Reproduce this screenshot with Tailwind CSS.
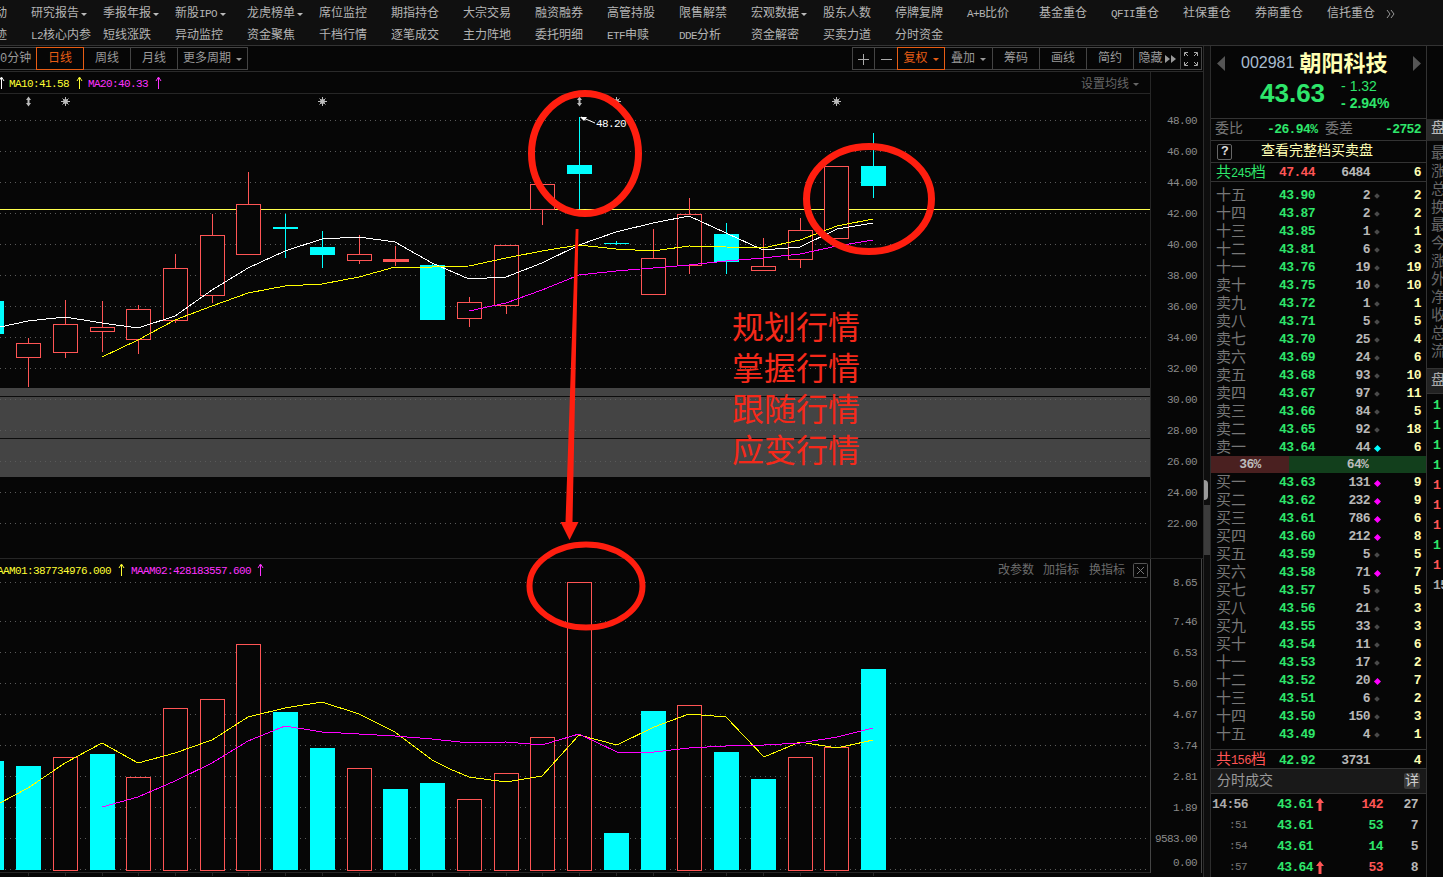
<!DOCTYPE html>
<html lang="en">
<head>
  <meta charset="UTF-8" />
  <title>朝阳科技 002981</title>
  <script src="https://cdn.jsdelivr.net/npm/@tailwindcss/browser@4"></script>
</head>
<body class="w-[1443px] h-[877px] overflow-hidden bg-[#060606] font-['Liberation_Mono','Noto_Sans_CJK_SC',monospace]">

  <!-- Top menu -->
  <nav class="h-[46px] pt-[3px] bg-[#101010] border-b border-[#333] overflow-hidden text-[12px] text-[#b4b4b4] leading-[22px]">
    <div class="grid grid-cols-[repeat(21,72px)] -ml-[41px] w-[1600px]">
      <span>主力异动</span>
      <span class="flex items-center gap-[2px]">研究报告<i class="w-0 h-0 border-x-[3px] border-x-transparent border-t-[3px] border-t-[#bbb]"></i></span>
      <span class="flex items-center gap-[2px]">季报年报<i class="w-0 h-0 border-x-[3px] border-x-transparent border-t-[3px] border-t-[#bbb]"></i></span>
      <span class="flex items-center gap-[3px]"><span>新股<span class="text-[11px] tracking-[-0.6px]">IPO</span></span><i class="w-0 h-0 border-x-[3px] border-x-transparent border-t-[3px] border-t-[#bbb]"></i></span>
      <span class="flex items-center gap-[2px]">龙虎榜单<i class="w-0 h-0 border-x-[3px] border-x-transparent border-t-[3px] border-t-[#bbb]"></i></span>
      <span>席位监控</span>
      <span>期指持仓</span>
      <span>大宗交易</span>
      <span>融资融券</span>
      <span>高管持股</span>
      <span>限售解禁</span>
      <span class="flex items-center gap-[2px]">宏观数据<i class="w-0 h-0 border-x-[3px] border-x-transparent border-t-[3px] border-t-[#bbb]"></i></span>
      <span>股东人数</span>
      <span>停牌复牌</span>
      <span><span class="text-[11px] tracking-[-0.6px]">A+B</span>比价</span>
      <span>基金重仓</span>
      <span><span class="text-[11px] tracking-[-0.6px]">QFII</span>重仓</span>
      <span>社保重仓</span>
      <span>券商重仓</span>
      <span class="flex items-center">信托重仓
        <svg class="w-[9px] h-[8px] ml-[11px]" viewBox="0 0 9 8" fill="none" stroke="#999"><path d="M1 0l3 4-3 4M5 0l3 4-3 4"/></svg>
      </span>
      <span></span>

      <span>主力足迹</span>
      <span><span class="text-[11px] tracking-[-0.6px]">L2</span>核心内参</span>
      <span>短线涨跌</span>
      <span>异动监控</span>
      <span>资金聚焦</span>
      <span>千档行情</span>
      <span>逐笔成交</span>
      <span>主力阵地</span>
      <span>委托明细</span>
      <span><span class="text-[11px] tracking-[-0.6px]">ETF</span>申赎</span>
      <span><span class="text-[11px] tracking-[-0.6px]">DDE</span>分析</span>
      <span>资金解密</span>
      <span>买卖力道</span>
      <span>分时资金</span>
    </div>
  </nav>

  <div class="flex h-[831px]">
    <!-- Chart column -->
    <div class="w-[1203px] shrink-0 overflow-hidden">
      <!-- Period and tool buttons -->
      <div class="h-[26px] pt-px border-b border-[#2a2a2a] flex justify-between text-[12px] text-[#999]">
        <div class="flex h-[23px] -ml-[12px] border border-[#444] border-l-0 [&>span]:pt-px">
          <span class="w-[48px] flex items-center justify-center">60分钟</span>
          <span class="w-[48px] flex items-center justify-center border border-[#e85d14] text-[#e85d14] -my-px">日线</span>
          <span class="w-[47px] flex items-center justify-center border-r border-[#444]">周线</span>
          <span class="w-[47px] flex items-center justify-center border-r border-[#444]">月线</span>
          <span class="w-[69px] flex items-center justify-center gap-[5px]">更多周期<i class="w-0 h-0 border-x-[3px] border-x-transparent border-t-[3px] border-t-[#999]"></i></span>
        </div>
        <div class="flex h-[23px] mr-px border border-[#444] [&>span]:pt-px">
          <span class="w-[22px] flex items-center justify-center border-r border-[#444]">
            <svg class="w-[11px] h-[11px]" viewBox="0 0 11 11" stroke="#aaa"><path d="M0 5.5h11M5.5 0v11"/></svg>
          </span>
          <span class="w-[22px] flex items-center justify-center">
            <svg class="w-[11px] h-[11px]" viewBox="0 0 11 11" stroke="#aaa"><path d="M0 5.5h11"/></svg>
          </span>
          <span class="w-[48px] flex items-center justify-center gap-[5px] border border-[#e85d14] text-[#e85d14] -my-px">复权<i class="w-0 h-0 border-x-[3px] border-x-transparent border-t-[3px] border-t-[#e85d14]"></i></span>
          <span class="w-[48px] flex items-center justify-center gap-[5px] border-r border-[#444]">叠加<i class="w-0 h-0 border-x-[3px] border-x-transparent border-t-[3px] border-t-[#999]"></i></span>
          <span class="w-[47px] flex items-center justify-center border-r border-[#444]">筹码</span>
          <span class="w-[47px] flex items-center justify-center border-r border-[#444]">画线</span>
          <span class="w-[47px] flex items-center justify-center border-r border-[#444]">简约</span>
          <span class="w-[47px] flex items-center justify-center gap-[2px] border-r border-[#444]">隐藏
            <svg class="w-[11px] h-[8px]" viewBox="0 0 11 8" fill="#999"><path d="M0 0l5 4-5 4zM6 0l5 4-5 4z"/></svg>
          </span>
          <span class="w-[20px] flex items-center justify-center">
            <svg class="w-[14px] h-[14px]" viewBox="0 0 14 14" fill="none" stroke="#aaa"><path d="M.5 4V.5H4M10 .5h3.5V4M13.5 10v3.5H10M4 13.5H.5V10M1 1l3 3M13 1l-3 3M13 13l-3-3M1 13l3-3"/></svg>
          </span>
        </div>
      </div>

      <!-- Candles, volume and hand drawn marks. Coordinates are page pixels -->
      <svg class="block w-[1203px] h-[805px]" viewBox="0 72 1203 805" font-size="11" letter-spacing="-0.6">
        <!-- frame -->
        <g stroke="#262626" shape-rendering="crispEdges">
          <path d="M0 93.5H1150M1150.5 72V873M0 558.5H1203M0 872.5H1150"/>
          <path stroke="#444" d="M1150.5 559V873M1201.5 559V873"/>
          <path d="M28.5 872v4M65.5 872v4M102.5 872v4M138.5 872v4M175.5 872v4M212.5 872v4M248.5 872v4M285.5 872v4M322.5 872v4M359.5 872v4M395.5 872v4M432.5 872v4M469.5 872v4M506.5 872v4M542.5 872v4M579.5 872v4M616.5 872v4M653.5 872v4M689.5 872v4M726.5 872v4M763.5 872v4M800.5 872v4M836.5 872v4M873.5 872v4"/>
        </g>
        <rect x="0" y="388" width="1150" height="89" fill="#444" shape-rendering="crispEdges"/>
        <path d="M0 396.5H1150M0 438.5H1150" stroke="#0c0c0c" shape-rendering="crispEdges"/>
        <!-- dotted grid -->
        <path stroke="#5a5a5a" stroke-dasharray="1 4" shape-rendering="crispEdges" d="M0 120.5H1150M0 151.5H1150M0 182.5H1150M0 213.5H1150M0 244.5H1150M0 275.5H1150M0 306.5H1150M0 337.5H1150M0 368.5H1150M0 399.5H1150M0 430.5H1150M0 461.5H1150M0 492.5H1150M0 523.5H1150M0 582.5H1150M0 621.5H1150M0 652.5H1150M0 683.5H1150M0 714.5H1150M0 745.5H1150M0 776.5H1150M0 807.5H1150M0 838.5H1150M0 869.5H1150"/>
        <path d="M0 209.5H1150" stroke="#ffff4d" shape-rendering="crispEdges"/>

        <!-- legends -->
        <text x="9" y="87" fill="#ffff33">MA10:41.58</text>
        <text x="88" y="87" fill="#ff33ff">MA20:40.33</text>
        <path d="M1.5 89V78M-1 81l2.5-4 2.5 4" stroke="#fff" fill="none"/>
        <path d="M79.5 89V78M77 81l2.5-4 2.5 4" stroke="#ffff33" fill="none"/>
        <path d="M158.5 89V78M156 81l2.5-4 2.5 4" stroke="#ff33ff" fill="none"/>
        <text x="1081" y="88" font-size="12" letter-spacing="0" fill="#666">设置均线</text>
        <path d="M1133 83h6l-3 3z" fill="#666"/>
        <text x="-9" y="574" fill="#ffff33">MAAM01:387734976.000</text>
        <text x="131" y="574" fill="#ff33ff">MAAM02:428183557.600</text>
        <path d="M121.5 576V565M119 568l2.5-4 2.5 4" stroke="#ffff33" fill="none"/>
        <path d="M260.5 576V565M258 568l2.5-4 2.5 4" stroke="#ff33ff" fill="none"/>
        <g font-size="12" letter-spacing="0" fill="#6c6c6c">
          <text x="998" y="574">改参数</text>
          <text x="1043" y="574">加指标</text>
          <text x="1089" y="574">换指标</text>
        </g>
        <rect x="1133.5" y="563.5" width="14" height="14" rx="1" fill="none" stroke="#555"/>
        <path d="M1137 567l7 7M1144 567l-7 7" stroke="#777"/>

        <!-- axis labels -->
        <g fill="#8a8a8a" text-anchor="end">
          <text x="1197" y="124">48.00</text><text x="1197" y="155">46.00</text><text x="1197" y="186">44.00</text>
          <text x="1197" y="217">42.00</text><text x="1197" y="248">40.00</text><text x="1197" y="279">38.00</text>
          <text x="1197" y="310">36.00</text><text x="1197" y="341">34.00</text><text x="1197" y="372">32.00</text>
          <text x="1197" y="403">30.00</text><text x="1197" y="434">28.00</text><text x="1197" y="465">26.00</text>
          <text x="1197" y="496">24.00</text><text x="1197" y="527">22.00</text>
          <text x="1197" y="586">8.65</text><text x="1197" y="625">7.46</text><text x="1197" y="656">6.53</text>
          <text x="1197" y="687">5.60</text><text x="1197" y="718">4.67</text><text x="1197" y="749">3.74</text>
          <text x="1197" y="780">2.81</text><text x="1197" y="811">1.89</text>
          <text x="1197" y="842">9583.00</text><text x="1197" y="866">0.00</text>
        </g>

        <!-- signal marks -->
        <g fill="#bbb" stroke="#bbb">
          <path d="M28.5 99v5" stroke-width="2"/><path d="M26 100l2.5-3.5 2.5 3.5zM26 103l2.5 3.5 2.5-3.5z" stroke="none"/>
          <path d="M579.5 99v5" stroke-width="2"/><path d="M577 100l2.5-3.5 2.5 3.5zM577 103l2.5 3.5 2.5-3.5z" stroke="none"/>
          <circle cx="65.5" cy="101.5" r="2"/><path d="M61 101.5h9M65.5 97v9M62.5 98.5l6 6M68.5 98.5l-6 6"/>
          <circle cx="322.5" cy="101.5" r="2"/><path d="M318 101.5h9M322.5 97v9M319.5 98.5l6 6M325.5 98.5l-6 6"/>
          <circle cx="616.5" cy="101.5" r="2"/><path d="M612 101.5h9M616.5 97v9M613.5 98.5l6 6M619.5 98.5l-6 6"/>
          <circle cx="836.5" cy="101.5" r="2"/><path d="M832 101.5h9M836.5 97v9M833.5 98.5l6 6M839.5 98.5l-6 6"/>
        </g>

        <!-- candle wicks -->
        <path fill="none" stroke="#ff5555" shape-rendering="crispEdges" d="M28.5 338V387M65.5 300V358M102.5 301V352M138.5 305V354M175.5 254V323M212.5 214V303M248.5 172V254M359.5 235V264M395.5 246V266M469.5 297V327M506.5 245V314M542.5 184V225M653.5 229V295M689.5 198V274M763.5 238V271M800.5 218V268"/>
        <path fill="none" stroke="#00ffff" shape-rendering="crispEdges" d="M285.5 214V258M322.5 231V268M432.5 263V320M579.5 117V209M616.5 241V245M726.5 223V274M873.5 133V198"/>
        <!-- red candles -->
        <g fill="#060606" stroke="#ff5555" shape-rendering="crispEdges">
          <rect x="16.5" y="343.5" width="24" height="14"/>
          <rect x="53.5" y="324.5" width="24" height="28"/>
          <rect x="90.5" y="327.5" width="24" height="4"/>
          <rect x="126.5" y="309.5" width="24" height="30"/>
          <rect x="163.5" y="268.5" width="24" height="52"/>
          <rect x="200.5" y="235.5" width="24" height="60"/>
          <rect x="236.5" y="204.5" width="24" height="50"/>
          <rect x="347.5" y="254.5" width="24" height="6"/>
          <rect x="383" y="259.5" width="25" height="1.5" fill="#ff5555"/>
          <rect x="457.5" y="302.5" width="24" height="16"/>
          <rect x="494.5" y="245.5" width="24" height="60"/>
          <rect x="530.5" y="184.5" width="24" height="25"/>
          <rect x="641.5" y="258.5" width="24" height="36"/>
          <rect x="677.5" y="214.5" width="24" height="51"/>
          <rect x="751.5" y="266.5" width="24" height="4"/>
          <rect x="788.5" y="230.5" width="24" height="29"/>
          <rect x="824.5" y="166.5" width="24" height="72"/>
        </g>
        <!-- cyan candles -->
        <g fill="#00ffff" shape-rendering="crispEdges">
          <rect x="-4" y="301" width="8" height="33"/>
          <rect x="273" y="227" width="25" height="2"/>
          <rect x="310" y="247" width="25" height="8"/>
          <rect x="420" y="265" width="25" height="55"/>
          <rect x="567" y="165" width="25" height="9"/>
          <rect x="604" y="243" width="25" height="1"/>
          <rect x="714" y="234" width="25" height="28"/>
          <rect x="861" y="166" width="25" height="20"/>
        </g>
        <!-- moving averages -->
        <g fill="none" shape-rendering="crispEdges">
          <polyline stroke="#ffffff" points="0,327 28,321 65,317 102,323 138,328 175,316 212,290 248,268 285,251 322,239 359,237 395,242 432,263 469,279 506,277 542,263 579,245 616,232 653,223 689,216 726,233 763,250 800,247 837,229 873,223"/>
          <polyline stroke="#ffff00" points="102,357 138,340 175,320 212,306 248,293 285,286 322,284 359,277 395,267 432,267 469,266 506,258 542,251 579,245 616,249 653,251 689,246 726,247 763,248 800,240 837,226 873,219"/>
          <polyline stroke="#ff00ff" points="469,311 506,303 542,290 579,275 616,271 653,268 689,265 726,261 763,258 800,254 837,246 873,240"/>
        </g>
        <!-- high price tag -->
        <path d="M581 117l14 6" stroke="#fff"/>
        <path d="M580 117l7 0-3 4z" fill="#fff"/>
        <text x="596" y="127" fill="#fff">48.20</text>

        <!-- volume bars -->
        <g fill="#060606" stroke="#ff5555" shape-rendering="crispEdges">
          <rect x="53.5" y="757" width="24" height="113"/>
          <rect x="126.5" y="777.5" width="24" height="92.5"/>
          <rect x="163.5" y="708.5" width="24" height="161.5"/>
          <rect x="200.5" y="699.5" width="24" height="170.5"/>
          <rect x="236.5" y="644.5" width="24" height="225.5"/>
          <rect x="347.5" y="768.5" width="24" height="101.5"/>
          <rect x="457.5" y="799.5" width="24" height="70.5"/>
          <rect x="494.5" y="773.5" width="24" height="96.5"/>
          <rect x="530.5" y="737.5" width="24" height="132.5"/>
          <rect x="567.5" y="582.5" width="24" height="287.5"/>
          <rect x="677.5" y="705.5" width="24" height="164.5"/>
          <rect x="788.5" y="757.5" width="24" height="112.5"/>
          <rect x="824.5" y="747.5" width="24" height="122.5"/>
        </g>
        <g fill="#00ffff" shape-rendering="crispEdges">
          <rect x="-4" y="761" width="8" height="109"/>
          <rect x="16" y="766" width="25" height="104"/>
          <rect x="90" y="754" width="25" height="116"/>
          <rect x="273" y="712" width="25" height="158"/>
          <rect x="310" y="748" width="25" height="122"/>
          <rect x="383" y="789" width="25" height="81"/>
          <rect x="420" y="783" width="25" height="87"/>
          <rect x="604" y="833" width="25" height="37"/>
          <rect x="641" y="711" width="25" height="159"/>
          <rect x="714" y="752" width="25" height="118"/>
          <rect x="751" y="779" width="25" height="91"/>
          <rect x="861" y="669" width="25" height="201"/>
        </g>
        <g fill="none" shape-rendering="crispEdges">
          <polyline stroke="#ffff00" points="0,803 28,788 65,763 102,743 138,763 175,753 212,740 248,717 285,708 322,702 359,714 395,732 432,760 450,769 469,777 506,782 542,776 579,735 617,745 654,727 689,714 726,717 764,757 800,742 837,748 873,740"/>
          <polyline stroke="#ff00ff" points="102,807 138,797 175,781 212,763 248,741 285,726 322,732 359,734 395,736 432,739 469,743 506,742 542,745 579,734 617,752 654,752 689,748 726,746 764,745 800,743 837,737 873,728"/>
        </g>

        <!-- red annotations -->
        <g fill="none" stroke="#ff1e0f">
          <ellipse cx="585" cy="153.5" rx="53.5" ry="60" stroke-width="7"/>
          <ellipse cx="869" cy="199" rx="62.5" ry="52.5" stroke-width="7"/>
          <ellipse cx="586" cy="586" rx="56.5" ry="41.5" stroke-width="6"/>
        </g>
        <polygon fill="#ff1e0f" points="575.7,229 578.5,229 572.5,522 578.5,522 569.5,540 560.5,522 565.5,522"/>
        <g font-size="32" letter-spacing="0" fill="#f5291a">
          <text x="732" y="339">规划行情</text>
          <text x="732" y="380">掌握行情</text>
          <text x="732" y="421">跟随行情</text>
          <text x="732" y="462">应变行情</text>
        </g>
      </svg>
    </div>

    <!-- Splitter between chart and quote panel -->
    <div class="w-[8px] shrink-0 bg-[#0e0e0e] border-x border-[#2c2c2c] flex flex-col">
      <div class="h-[434px]"></div>
      <div class="h-[20px] w-[4px] bg-[#999] rounded-r-full"></div>
      <div class="h-[5px]"></div>
      <div class="h-[50px] bg-[#3c3c3c]"></div>
    </div>

    <!-- Quote panel -->
    <aside class="w-[216px] shrink-0 border-r border-[#333] text-[13px] tracking-[-0.6px] font-bold text-[#b8b8b8]">
      <header class="h-[73px] border-b border-[#333] tracking-normal font-['Liberation_Sans','Noto_Sans_CJK_SC',sans-serif]">
        <div class="h-[32px] flex items-center pt-[2px] relative">
          <svg class="absolute left-[6px] top-[10px] w-[8px] h-[15px]" viewBox="0 0 8 15" fill="#555"><path d="M8 0v15L0 7.5z"/></svg>
          <span class="ml-[30px] text-[16px] font-normal text-[#a8bcd0]">002981</span>
          <span class="ml-[5px] text-[22px] text-[#ffffb3]">朝阳科技</span>
          <svg class="absolute left-[202px] top-[10px] w-[8px] h-[15px]" viewBox="0 0 8 15" fill="#555"><path d="M0 0v15l8-7.5z"/></svg>
        </div>
        <div class="flex items-center text-[#2ee66b]">
          <span class="ml-[49px] pb-[4px] text-[26px] leading-[30px]">43.63</span>
          <div class="ml-[16px] flex flex-col leading-[17px] font-normal text-[14px]">
            <span>- 1.32</span>
            <span class="font-bold">- 2.94%</span>
          </div>
        </div>
      </header>

      <div class="h-[22px] border-b border-[#333] flex items-center text-[#2ee66b]">
        <span class="ml-[4px] w-[52px] text-[14px] tracking-normal font-normal text-[#777]">委比</span>
        <span class="w-[58px]">-26.94%</span>
        <span class="text-[14px] tracking-normal font-normal text-[#777]">委差</span>
        <span class="ml-auto mr-[5px]">-2752</span>
      </div>
      <div class="h-[22px] border-b border-[#333] flex items-center text-[#ffffb3]">
        <span class="ml-[6px] w-[15px] h-[16px] border border-[#666] rounded-[2px] text-[#ddd] flex items-center justify-center">?</span>
        <span class="ml-[29px] text-[14px] tracking-normal font-normal">查看完整档买卖盘</span>
      </div>
      <div class="h-[19px] border-b border-[#333] grid grid-cols-[68px_40px_51px_14px_1fr] items-center [&>span:not(:first-child)]:-translate-y-[2px]">
        <span class="pl-[5px] text-[15px] tracking-normal font-normal text-[#2ee66b] whitespace-nowrap">共<span class="text-[12px] tracking-[-0.6px]">245</span>档</span>
        <span class="text-[#ff5555]">47.44</span>
        <span class="text-right">6484</span><span></span>
        <span class="text-right pr-[5px] text-[#ffffb3]">6</span>
      </div>

      <!-- Sell side -->
      <div class="pt-[4px] h-[274px] [&>div>span:not(:first-child)]:-translate-y-[2px] [&>div>i]:-translate-y-px">
        <div class="h-[18px] grid grid-cols-[68px_40px_51px_14px_1fr] items-center"><span class="pl-[5px] text-[15px] tracking-normal font-normal text-[#777]">十五</span><span class="text-[#2ee66b]">43.90</span><span class="text-right">2</span><i class="justify-self-center w-[4px] h-[4px] rotate-45 bg-[#4a4a4a]"></i><span class="text-right pr-[5px] text-[#ffffb3]">2</span></div>
        <div class="h-[18px] grid grid-cols-[68px_40px_51px_14px_1fr] items-center"><span class="pl-[5px] text-[15px] tracking-normal font-normal text-[#777]">十四</span><span class="text-[#2ee66b]">43.87</span><span class="text-right">2</span><i class="justify-self-center w-[4px] h-[4px] rotate-45 bg-[#4a4a4a]"></i><span class="text-right pr-[5px] text-[#ffffb3]">2</span></div>
        <div class="h-[18px] grid grid-cols-[68px_40px_51px_14px_1fr] items-center"><span class="pl-[5px] text-[15px] tracking-normal font-normal text-[#777]">十三</span><span class="text-[#2ee66b]">43.85</span><span class="text-right">1</span><i class="justify-self-center w-[4px] h-[4px] rotate-45 bg-[#4a4a4a]"></i><span class="text-right pr-[5px] text-[#ffffb3]">1</span></div>
        <div class="h-[18px] grid grid-cols-[68px_40px_51px_14px_1fr] items-center"><span class="pl-[5px] text-[15px] tracking-normal font-normal text-[#777]">十二</span><span class="text-[#2ee66b]">43.81</span><span class="text-right">6</span><i class="justify-self-center w-[4px] h-[4px] rotate-45 bg-[#4a4a4a]"></i><span class="text-right pr-[5px] text-[#ffffb3]">3</span></div>
        <div class="h-[18px] grid grid-cols-[68px_40px_51px_14px_1fr] items-center"><span class="pl-[5px] text-[15px] tracking-normal font-normal text-[#777]">十一</span><span class="text-[#2ee66b]">43.76</span><span class="text-right">19</span><i class="justify-self-center w-[4px] h-[4px] rotate-45 bg-[#4a4a4a]"></i><span class="text-right pr-[5px] text-[#ffffb3]">19</span></div>
        <div class="h-[18px] grid grid-cols-[68px_40px_51px_14px_1fr] items-center"><span class="pl-[5px] text-[15px] tracking-normal font-normal text-[#777]">卖十</span><span class="text-[#2ee66b]">43.75</span><span class="text-right">10</span><i class="justify-self-center w-[4px] h-[4px] rotate-45 bg-[#4a4a4a]"></i><span class="text-right pr-[5px] text-[#ffffb3]">10</span></div>
        <div class="h-[18px] grid grid-cols-[68px_40px_51px_14px_1fr] items-center"><span class="pl-[5px] text-[15px] tracking-normal font-normal text-[#777]">卖九</span><span class="text-[#2ee66b]">43.72</span><span class="text-right">1</span><i class="justify-self-center w-[4px] h-[4px] rotate-45 bg-[#4a4a4a]"></i><span class="text-right pr-[5px] text-[#ffffb3]">1</span></div>
        <div class="h-[18px] grid grid-cols-[68px_40px_51px_14px_1fr] items-center"><span class="pl-[5px] text-[15px] tracking-normal font-normal text-[#777]">卖八</span><span class="text-[#2ee66b]">43.71</span><span class="text-right">5</span><i class="justify-self-center w-[4px] h-[4px] rotate-45 bg-[#4a4a4a]"></i><span class="text-right pr-[5px] text-[#ffffb3]">5</span></div>
        <div class="h-[18px] grid grid-cols-[68px_40px_51px_14px_1fr] items-center"><span class="pl-[5px] text-[15px] tracking-normal font-normal text-[#777]">卖七</span><span class="text-[#2ee66b]">43.70</span><span class="text-right">25</span><i class="justify-self-center w-[4px] h-[4px] rotate-45 bg-[#4a4a4a]"></i><span class="text-right pr-[5px] text-[#ffffb3]">4</span></div>
        <div class="h-[18px] grid grid-cols-[68px_40px_51px_14px_1fr] items-center"><span class="pl-[5px] text-[15px] tracking-normal font-normal text-[#777]">卖六</span><span class="text-[#2ee66b]">43.69</span><span class="text-right">24</span><i class="justify-self-center w-[4px] h-[4px] rotate-45 bg-[#4a4a4a]"></i><span class="text-right pr-[5px] text-[#ffffb3]">6</span></div>
        <div class="h-[18px] grid grid-cols-[68px_40px_51px_14px_1fr] items-center"><span class="pl-[5px] text-[15px] tracking-normal font-normal text-[#777]">卖五</span><span class="text-[#2ee66b]">43.68</span><span class="text-right">93</span><i class="justify-self-center w-[4px] h-[4px] rotate-45 bg-[#4a4a4a]"></i><span class="text-right pr-[5px] text-[#ffffb3]">10</span></div>
        <div class="h-[18px] grid grid-cols-[68px_40px_51px_14px_1fr] items-center"><span class="pl-[5px] text-[15px] tracking-normal font-normal text-[#777]">卖四</span><span class="text-[#2ee66b]">43.67</span><span class="text-right">97</span><i class="justify-self-center w-[4px] h-[4px] rotate-45 bg-[#4a4a4a]"></i><span class="text-right pr-[5px] text-[#ffffb3]">11</span></div>
        <div class="h-[18px] grid grid-cols-[68px_40px_51px_14px_1fr] items-center"><span class="pl-[5px] text-[15px] tracking-normal font-normal text-[#777]">卖三</span><span class="text-[#2ee66b]">43.66</span><span class="text-right">84</span><i class="justify-self-center w-[4px] h-[4px] rotate-45 bg-[#4a4a4a]"></i><span class="text-right pr-[5px] text-[#ffffb3]">5</span></div>
        <div class="h-[18px] grid grid-cols-[68px_40px_51px_14px_1fr] items-center"><span class="pl-[5px] text-[15px] tracking-normal font-normal text-[#777]">卖二</span><span class="text-[#2ee66b]">43.65</span><span class="text-right">92</span><i class="justify-self-center w-[4px] h-[4px] rotate-45 bg-[#4a4a4a]"></i><span class="text-right pr-[5px] text-[#ffffb3]">18</span></div>
        <div class="h-[18px] grid grid-cols-[68px_40px_51px_14px_1fr] items-center"><span class="pl-[5px] text-[15px] tracking-normal font-normal text-[#777]">卖一</span><span class="text-[#2ee66b]">43.64</span><span class="text-right">44</span><i class="justify-self-center w-[5px] h-[5px] rotate-45 bg-[#00ffff]"></i><span class="text-right pr-[5px] text-[#ffffb3]">6</span></div>
      </div>

      <!-- Sell / buy ratio -->
      <div class="h-[17px] flex text-[#bbb]">
        <span class="w-[78px] bg-[#4a2020] flex items-center justify-center">36%</span>
        <span class="flex-1 bg-[#123f1c] flex items-center justify-center">64%</span>
      </div>

      <!-- Buy side -->
      <div class="h-[277px] border-b border-[#333] [&>div>span:not(:first-child)]:-translate-y-[2px] [&>div>i]:-translate-y-px">
        <div class="h-[18px] grid grid-cols-[68px_40px_51px_14px_1fr] items-center"><span class="pl-[5px] text-[15px] tracking-normal font-normal text-[#777]">买一</span><span class="text-[#2ee66b]">43.63</span><span class="text-right">131</span><i class="justify-self-center w-[5px] h-[5px] rotate-45 bg-[#ff00ff]"></i><span class="text-right pr-[5px] text-[#ffffb3]">9</span></div>
        <div class="h-[18px] grid grid-cols-[68px_40px_51px_14px_1fr] items-center"><span class="pl-[5px] text-[15px] tracking-normal font-normal text-[#777]">买二</span><span class="text-[#2ee66b]">43.62</span><span class="text-right">232</span><i class="justify-self-center w-[5px] h-[5px] rotate-45 bg-[#ff00ff]"></i><span class="text-right pr-[5px] text-[#ffffb3]">9</span></div>
        <div class="h-[18px] grid grid-cols-[68px_40px_51px_14px_1fr] items-center"><span class="pl-[5px] text-[15px] tracking-normal font-normal text-[#777]">买三</span><span class="text-[#2ee66b]">43.61</span><span class="text-right">786</span><i class="justify-self-center w-[5px] h-[5px] rotate-45 bg-[#ff00ff]"></i><span class="text-right pr-[5px] text-[#ffffb3]">6</span></div>
        <div class="h-[18px] grid grid-cols-[68px_40px_51px_14px_1fr] items-center"><span class="pl-[5px] text-[15px] tracking-normal font-normal text-[#777]">买四</span><span class="text-[#2ee66b]">43.60</span><span class="text-right">212</span><i class="justify-self-center w-[5px] h-[5px] rotate-45 bg-[#ff00ff]"></i><span class="text-right pr-[5px] text-[#ffffb3]">8</span></div>
        <div class="h-[18px] grid grid-cols-[68px_40px_51px_14px_1fr] items-center"><span class="pl-[5px] text-[15px] tracking-normal font-normal text-[#777]">买五</span><span class="text-[#2ee66b]">43.59</span><span class="text-right">5</span><i class="justify-self-center w-[4px] h-[4px] rotate-45 bg-[#4a4a4a]"></i><span class="text-right pr-[5px] text-[#ffffb3]">5</span></div>
        <div class="h-[18px] grid grid-cols-[68px_40px_51px_14px_1fr] items-center"><span class="pl-[5px] text-[15px] tracking-normal font-normal text-[#777]">买六</span><span class="text-[#2ee66b]">43.58</span><span class="text-right">71</span><i class="justify-self-center w-[5px] h-[5px] rotate-45 bg-[#ff00ff]"></i><span class="text-right pr-[5px] text-[#ffffb3]">7</span></div>
        <div class="h-[18px] grid grid-cols-[68px_40px_51px_14px_1fr] items-center"><span class="pl-[5px] text-[15px] tracking-normal font-normal text-[#777]">买七</span><span class="text-[#2ee66b]">43.57</span><span class="text-right">5</span><i class="justify-self-center w-[4px] h-[4px] rotate-45 bg-[#4a4a4a]"></i><span class="text-right pr-[5px] text-[#ffffb3]">5</span></div>
        <div class="h-[18px] grid grid-cols-[68px_40px_51px_14px_1fr] items-center"><span class="pl-[5px] text-[15px] tracking-normal font-normal text-[#777]">买八</span><span class="text-[#2ee66b]">43.56</span><span class="text-right">21</span><i class="justify-self-center w-[4px] h-[4px] rotate-45 bg-[#4a4a4a]"></i><span class="text-right pr-[5px] text-[#ffffb3]">3</span></div>
        <div class="h-[18px] grid grid-cols-[68px_40px_51px_14px_1fr] items-center"><span class="pl-[5px] text-[15px] tracking-normal font-normal text-[#777]">买九</span><span class="text-[#2ee66b]">43.55</span><span class="text-right">33</span><i class="justify-self-center w-[4px] h-[4px] rotate-45 bg-[#4a4a4a]"></i><span class="text-right pr-[5px] text-[#ffffb3]">3</span></div>
        <div class="h-[18px] grid grid-cols-[68px_40px_51px_14px_1fr] items-center"><span class="pl-[5px] text-[15px] tracking-normal font-normal text-[#777]">买十</span><span class="text-[#2ee66b]">43.54</span><span class="text-right">11</span><i class="justify-self-center w-[4px] h-[4px] rotate-45 bg-[#4a4a4a]"></i><span class="text-right pr-[5px] text-[#ffffb3]">6</span></div>
        <div class="h-[18px] grid grid-cols-[68px_40px_51px_14px_1fr] items-center"><span class="pl-[5px] text-[15px] tracking-normal font-normal text-[#777]">十一</span><span class="text-[#2ee66b]">43.53</span><span class="text-right">17</span><i class="justify-self-center w-[4px] h-[4px] rotate-45 bg-[#4a4a4a]"></i><span class="text-right pr-[5px] text-[#ffffb3]">2</span></div>
        <div class="h-[18px] grid grid-cols-[68px_40px_51px_14px_1fr] items-center"><span class="pl-[5px] text-[15px] tracking-normal font-normal text-[#777]">十二</span><span class="text-[#2ee66b]">43.52</span><span class="text-right">20</span><i class="justify-self-center w-[5px] h-[5px] rotate-45 bg-[#ff00ff]"></i><span class="text-right pr-[5px] text-[#ffffb3]">7</span></div>
        <div class="h-[18px] grid grid-cols-[68px_40px_51px_14px_1fr] items-center"><span class="pl-[5px] text-[15px] tracking-normal font-normal text-[#777]">十三</span><span class="text-[#2ee66b]">43.51</span><span class="text-right">6</span><i class="justify-self-center w-[4px] h-[4px] rotate-45 bg-[#4a4a4a]"></i><span class="text-right pr-[5px] text-[#ffffb3]">2</span></div>
        <div class="h-[18px] grid grid-cols-[68px_40px_51px_14px_1fr] items-center"><span class="pl-[5px] text-[15px] tracking-normal font-normal text-[#777]">十四</span><span class="text-[#2ee66b]">43.50</span><span class="text-right">150</span><i class="justify-self-center w-[4px] h-[4px] rotate-45 bg-[#4a4a4a]"></i><span class="text-right pr-[5px] text-[#ffffb3]">3</span></div>
        <div class="h-[18px] grid grid-cols-[68px_40px_51px_14px_1fr] items-center"><span class="pl-[5px] text-[15px] tracking-normal font-normal text-[#777]">十五</span><span class="text-[#2ee66b]">43.49</span><span class="text-right">4</span><i class="justify-self-center w-[4px] h-[4px] rotate-45 bg-[#4a4a4a]"></i><span class="text-right pr-[5px] text-[#ffffb3]">1</span></div>
      </div>

      <div class="h-[19px] border-b border-[#333] grid grid-cols-[68px_40px_51px_14px_1fr] items-center [&>span:not(:first-child)]:-translate-y-px">
        <span class="pl-[5px] text-[15px] tracking-normal font-normal text-[#ff5555] whitespace-nowrap">共<span class="text-[12px] tracking-[-0.6px]">156</span>档</span>
        <span class="text-[#2ee66b]">42.92</span>
        <span class="text-right">3731</span><span></span>
        <span class="text-right pr-[5px] text-[#ffffb3]">4</span>
      </div>

      <div class="h-[25px] bg-[#191919] border-b border-[#333] flex items-center justify-between pl-[6px] pr-[6px] text-[14px] tracking-normal font-normal text-[#999]">
        <span>分时成交</span>
        <span class="w-[16px] h-[16px] bg-[#3a3a3a] rounded-[2px] flex items-center justify-center text-[#ccc]">详</span>
      </div>

      <!-- Trades -->
      <div class="h-[21px] grid grid-cols-[66px_50px_56px_35px] items-center">
        <span class="pl-px text-[#aaa]">14:56</span>
        <span class="flex items-center text-[#2ee66b]">43.61<svg class="w-[8px] h-[13px] ml-[3px]" viewBox="0 0 8 13" fill="#ff5555"><path d="M4 0l4 5H5.5v8h-3V5H0z"/></svg></span>
        <span class="text-right text-[#ff5555]">142</span>
        <span class="text-right">27</span>
      </div>
      <div class="h-[21px] grid grid-cols-[66px_50px_56px_35px] items-center">
        <span class="w-[36px] text-right text-[11px] font-normal text-[#777]">:51</span>
        <span class="text-[#2ee66b]">43.61</span>
        <span class="text-right text-[#2ee66b]">53</span>
        <span class="text-right">7</span>
      </div>
      <div class="h-[21px] grid grid-cols-[66px_50px_56px_35px] items-center">
        <span class="w-[36px] text-right text-[11px] font-normal text-[#777]">:54</span>
        <span class="text-[#2ee66b]">43.61</span>
        <span class="text-right text-[#2ee66b]">14</span>
        <span class="text-right">5</span>
      </div>
      <div class="h-[21px] grid grid-cols-[66px_50px_56px_35px] items-center">
        <span class="w-[36px] text-right text-[11px] font-normal text-[#777]">:57</span>
        <span class="flex items-center text-[#2ee66b]">43.64<svg class="w-[8px] h-[13px] ml-[3px]" viewBox="0 0 8 13" fill="#ff5555"><path d="M4 0l4 5H5.5v8h-3V5H0z"/></svg></span>
        <span class="text-right text-[#ff5555]">53</span>
        <span class="text-right">8</span>
      </div>
    </aside>

    <!-- Clipped side panel -->
    <aside class="flex-1 overflow-hidden whitespace-nowrap text-[15px] text-[#666]">
      <div class="h-[73px]"></div>
      <div class="h-[22px] bg-[#2a2a2a] text-[#bbb] pl-[4px] leading-[22px]">盘</div>
      <div class="pl-[4px] pt-[5px] leading-[18px] h-[228px] border-b border-[#333]">
        <div>最</div><div>涨</div><div>总</div><div>换</div><div>最</div><div>今</div>
        <div>涨</div><div>外</div><div>净</div><div>收</div><div>总</div><div>流</div>
      </div>
      <div class="h-[25px] bg-[#222] text-[#aaa] pl-[4px] leading-[25px] border-b border-[#333]">盘</div>
      <div class="pl-[6px] pt-[2px] text-[13px] tracking-[-0.6px] font-bold leading-[20px]">
        <div class="text-[#2ee66b]">1</div><div class="text-[#2ee66b]">1</div><div class="text-[#2ee66b]">1</div>
        <div class="text-[#2ee66b]">1</div><div class="text-[#ff5555]">1</div><div class="text-[#ff5555]">1</div>
        <div class="text-[#ff5555]">1</div><div class="text-[#2ee66b]">1</div><div class="text-[#ff5555]">1</div>
        <div class="text-[#aaa]">15</div>
      </div>
    </aside>
  </div>
</body>
</html>
